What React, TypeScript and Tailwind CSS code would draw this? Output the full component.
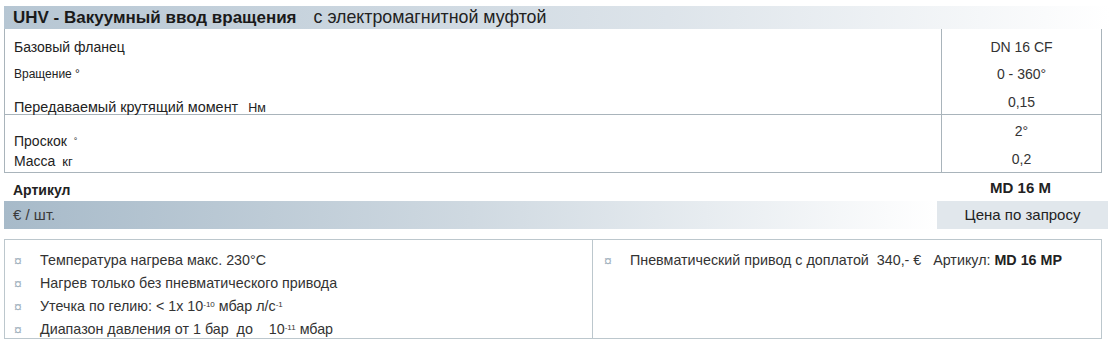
import React from "react";

const font = { fontFamily: '"Liberation Sans", Arial, sans-serif' };

function Bullet() {
  return <span className="w-[26px] shrink-0 text-[14px] text-[#a3b3c0] leading-none">¤</span>;
}

export default function App() {
  return (
    <div className="w-[1110px] h-[346px] bg-white text-[#222] overflow-hidden" style={font}>
      {/* header */}
      <div className="mt-[6px] ml-[4px] h-[23px] flex items-center pl-[9px] bg-gradient-to-r from-[#b6c6d3] via-[#dde4ea] via-60% to-white">
        <span className="text-[17px] font-bold text-[#1a1a1a]">UHV - Вакуумный ввод вращения</span>
        <span className="ml-[17px] text-[17.8px] text-[#222]">с электромагнитной муфтой</span>
      </div>

      {/* spec table */}
      <div className="ml-[4px] w-[1098px] border-l border-r border-[#a9b4bb]">
        <div className="flex h-[86px] border-b border-[#a9b4bb]">
          <div className="w-[936px] pl-[9px]">
            <div className="text-[14px] leading-[16px] pt-[10px]">Базовый фланец</div>
            <div className="text-[12px] leading-[14px] pt-[12px]">Вращение °</div>
            <div className="text-[14.4px] leading-[16px] pt-[18px] whitespace-nowrap">
              Передаваемый крутящий момент <span className="ml-[6px] text-[12.5px]">Нм</span>
            </div>
          </div>
          <div className="flex-1 border-l border-[#a9b4bb] text-[14px] text-[#333] text-center">
            <div className="leading-[16px] pt-[10px]">DN 16 CF</div>
            <div className="leading-[16px] pt-[11px]">0 - 360°</div>
            <div className="leading-[16px] pt-[12px]">0,15</div>
          </div>
        </div>
        <div className="flex h-[58px] border-b border-[#a9b4bb]">
          <div className="w-[936px] pl-[9px] text-[14px]">
            <div className="leading-[16px] pt-[18px]">
              Проскок <span className="ml-[3px] text-[9px] align-top">°</span>
            </div>
            <div className="leading-[16px] pt-[4px]">
              Масса <span className="ml-[3px] text-[13px]">кг</span>
            </div>
          </div>
          <div className="flex-1 border-l border-[#a9b4bb] text-[14px] text-[#333] text-center">
            <div className="leading-[16px] pt-[8px]">2°</div>
            <div className="leading-[16px] pt-[12px]">0,2</div>
          </div>
        </div>
      </div>

      {/* article row */}
      <div className="flex h-[28px] items-end">
        <div className="w-[940px] pl-[13px] text-[14px] font-bold leading-[16px] pb-[3px]">Артикул</div>
        <div className="w-[161px] text-center text-[15px] font-bold leading-[16px] pb-[5px]">MD 16 M</div>
      </div>

      {/* price row */}
      <div className="flex h-[28px] ml-[4px]">
        <div className="w-[933px] flex items-center pl-[9px] text-[15px] text-[#3a3a3a] bg-gradient-to-r from-[#a7bac9] via-[#cfd9e1] via-50% to-white">
          € / шт.
        </div>
        <div className="w-[171px] flex items-center justify-center text-[15px] text-[#222] bg-[#e1e7ec]">
          Цена по запросу
        </div>
      </div>

      {/* notes */}
      <div className="mt-[10px] ml-[4px] w-[1098px] h-[100px] border border-[#bcc7cd] flex">
        <div className="w-[588px] border-r border-[#bcc7cd] pl-[9px] pt-[9px] text-[14.3px] text-[#333]">
          <div className="flex items-center h-[23px]"><Bullet />Температура нагрева макс. 230°C</div>
          <div className="flex items-center h-[23px]"><Bullet />Нагрев только без пневматического привода</div>
          <div className="flex items-center h-[23px]">
            <Bullet />
            <span>
              Утечка по гелию: &lt; 1x 10<sup className="text-[8px]">-10</sup> мбар л/с<sup className="text-[8px]">-1</sup>
            </span>
          </div>
          <div className="flex items-center h-[23px]">
            <Bullet />
            <span>
              Диапазон давления от 1 бар&nbsp; до &nbsp;&nbsp; 10<sup className="text-[8px]">-11</sup> мбар
            </span>
          </div>
        </div>
        <div className="flex-1 pl-[11px] pt-[9px] text-[14.3px] text-[#333]">
          <div className="flex items-center h-[23px]">
            <Bullet />
            <span>
              Пневматический привод с доплатой&nbsp; 340,- €&nbsp;&nbsp; Артикул: <b className="text-[#222]">MD 16 MP</b>
            </span>
          </div>
        </div>
      </div>
    </div>
  );
}
